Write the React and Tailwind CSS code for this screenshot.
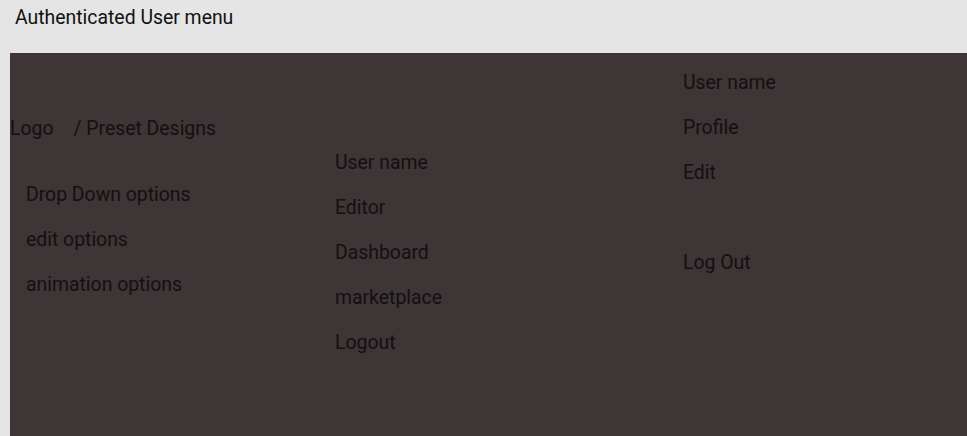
import React from 'react';

const Item = ({ children, className = '' }) => (
    <div className={`h-[45px] flex items-center whitespace-nowrap ${className}`}>{children}</div>
);

export default function App() {
    return (
        <div className="w-[967px] h-[436px] bg-[#e5e5e5] flex flex-col text-[19.4px] text-[#111] font-['Roboto',sans-serif] overflow-hidden">
            {/* Title bar */}
            <div className="h-[53px] shrink-0 pl-[15px] pt-[4px]">
                <div className="h-[27px] flex items-center">Authenticated User menu</div>
            </div>

            {/* Menu panel */}
            <div className="flex-1 ml-[10px] bg-[#3d3536] flex">
                {/* Logo + preset dropdown */}
                <div className="w-[325px] pt-[53px]">
                    <Item>
                        <span>Logo</span>
                        <span className="ml-[20px]">/ Preset Designs</span>
                    </Item>
                    <div className="pl-[16px] mt-[21px]">
                        <Item>Drop Down options</Item>
                        <Item>edit options</Item>
                        <Item>animation options</Item>
                    </div>
                </div>

                {/* User menu variant 1 */}
                <div className="w-[348px] pt-[87px]">
                    <Item>User name</Item>
                    <Item>Editor</Item>
                    <Item>Dashboard</Item>
                    <Item>marketplace</Item>
                    <Item>Logout</Item>
                </div>

                {/* User menu variant 2 */}
                <div className="pt-[7px]">
                    <Item>User name</Item>
                    <Item>Profile</Item>
                    <Item>Edit</Item>
                    <div className="h-[45px]" />
                    <Item>Log Out</Item>
                </div>
            </div>
        </div>
    );
}
